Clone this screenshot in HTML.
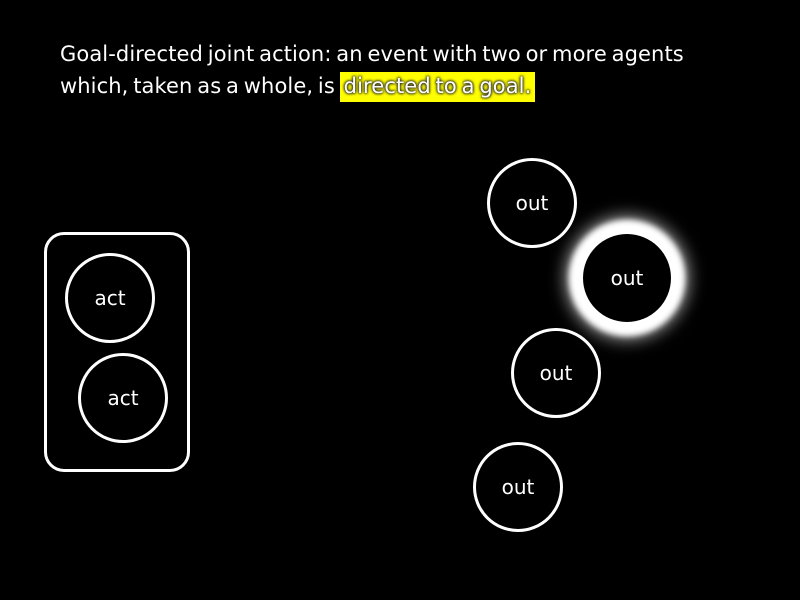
<!DOCTYPE html>
<html><head><style>
body{margin:0;background:#000;width:800px;height:600px;overflow:hidden;position:relative;font-family:"DejaVu Sans","Liberation Sans",sans-serif;color:#fff}
.t{position:absolute;left:60px;top:38px;font-size:21px;line-height:32px;letter-spacing:0.1px;word-spacing:-2px;white-space:nowrap}
.hl{background:#ff0;padding:2px 4px 4px 4px;color:#fff;text-shadow:0 0 3px #333,0 0 3px #333,0 0 2px #000}
.c{position:absolute;width:84px;height:84px;border:3.5px solid #fff;border-radius:50%;display:flex;align-items:center;justify-content:center;font-size:20px}
.g{position:absolute;width:88px;height:88px;border-radius:50%;background:#000;box-shadow:0 0 6px 14px #fff,0 0 16px 18px rgba(255,255,255,.6);display:flex;align-items:center;justify-content:center;font-size:20px}
.r{position:absolute;left:44px;top:232px;width:140px;height:234px;border:3.5px solid #fff;border-radius:20px}
</style></head><body>
<div class="t">Goal-directed joint action: an event with two or more agents<br>which, taken as a whole, is <span class="hl">directed to a goal.</span></div>
<div class="r"></div>
<div class="c" style="left:65px;top:253px">act</div>
<div class="c" style="left:78px;top:353px">act</div>
<div class="c" style="left:487px;top:158px">out</div>
<div class="g" style="left:583px;top:234px">out</div>
<div class="c" style="left:511px;top:328px">out</div>
<div class="c" style="left:473px;top:442px">out</div>
</body></html>
